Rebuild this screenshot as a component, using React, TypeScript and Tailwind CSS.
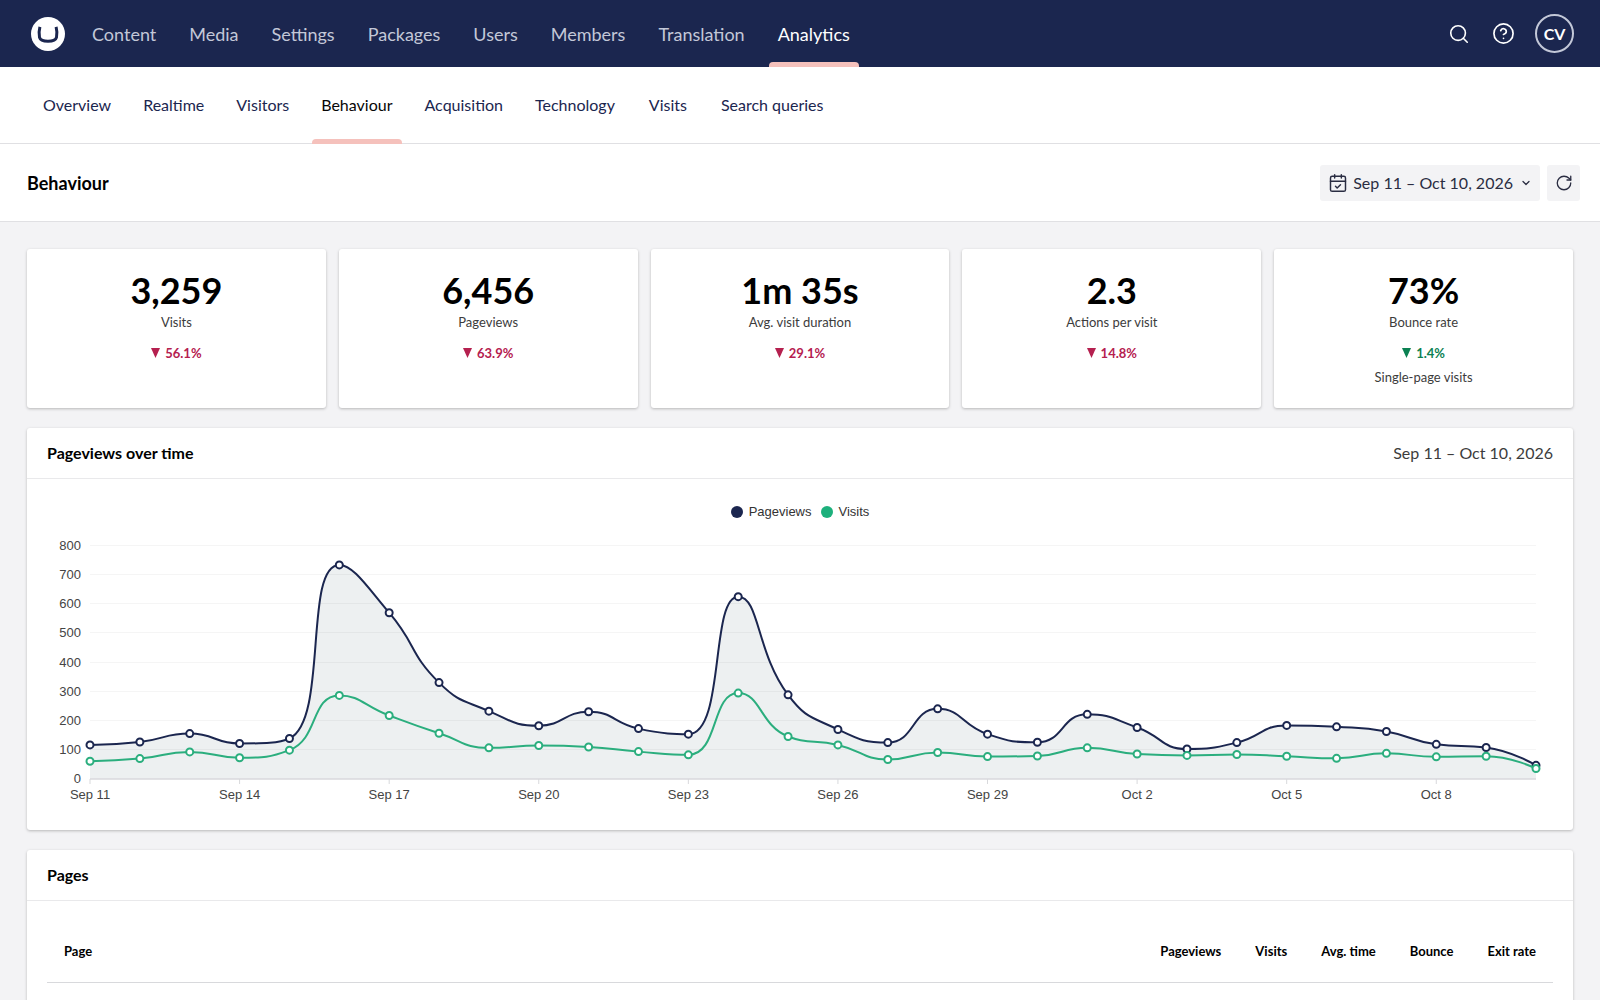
import { useLayoutEffect, useRef, useState } from 'react';
import { CalendarCheck, ChevronDown, CircleQuestionMark, RotateCw, Search } from 'lucide-react';

const SECTIONS = ['Content', 'Media', 'Settings', 'Packages', 'Users', 'Members', 'Translation', 'Analytics'];

const TABS = ['Overview', 'Realtime', 'Visitors', 'Behaviour', 'Acquisition', 'Technology', 'Visits', 'Search queries'];

const METRICS = [
  { value: '3,259', label: 'Visits', change: '56.1%', good: false },
  { value: '6,456', label: 'Pageviews', change: '63.9%', good: false },
  { value: '1m 35s', label: 'Avg. visit duration', change: '29.1%', good: false },
  { value: '2.3', label: 'Actions per visit', change: '14.8%', good: false },
  { value: '73%', label: 'Bounce rate', change: '1.4%', good: true, note: 'Single-page visits' },
];

const COLUMNS = ['Pageviews', 'Visits', 'Avg. time', 'Bounce', 'Exit rate'];

const PERIOD = 'Sep 11 – Oct 10, 2026';

const PAGEVIEWS = [
  117, 127, 156, 122, 139, 735, 571, 331, 233, 183, 231, 173, 154, 626, 289, 170, 125, 241, 154, 126, 222, 177, 103,
  125, 184, 179, 163, 119, 108, 47,
];

const VISITS = [
  61, 70, 93, 73, 99, 287, 218, 157, 107, 115, 110, 94, 83, 295, 146, 117, 67, 91, 77, 79, 107, 86, 81, 84, 78, 71, 88,
  76, 78, 36,
];

const DAY_LABELS = ['Sep 11', 'Sep 14', 'Sep 17', 'Sep 20', 'Sep 23', 'Sep 26', 'Sep 29', 'Oct 2', 'Oct 5', 'Oct 8'];

type Point = { x: number; y: number };

const clamp = (v: number, a: number, b: number) => Math.max(Math.min(v, Math.max(a, b)), Math.min(a, b));

// Smooth line through all points. Control points never go past a neighbouring
// point, so the curve does not overshoot at peaks.
function smoothPath(points: Point[], smooth = 0.5) {
  let d = `M${points[0].x},${points[0].y}`;
  let cp0 = points[0];

  for (let i = 1; i < points.length; i++) {
    const p = points[i];
    const prev = points[i - 1];
    const next = points[i + 1];
    let cp1 = p;
    let nextCp0 = p;

    if (next) {
      const lenPrev = Math.hypot(p.x - prev.x, p.y - prev.y);
      const lenNext = Math.hypot(next.x - p.x, next.y - p.y);
      const ratio = lenNext / (lenNext + lenPrev);

      const nx = clamp(p.x + (next.x - prev.x) * smooth * ratio, p.x, next.x);
      const ny = clamp(p.y + (next.y - prev.y) * smooth * ratio, p.y, next.y);
      cp1 = {
        x: clamp(p.x - ((nx - p.x) * lenPrev) / lenNext, prev.x, p.x),
        y: clamp(p.y - ((ny - p.y) * lenPrev) / lenNext, prev.y, p.y),
      };
      nextCp0 = {
        x: p.x + ((p.x - cp1.x) * lenNext) / lenPrev,
        y: p.y + ((p.y - cp1.y) * lenNext) / lenPrev,
      };
    }

    d += `C${cp0.x},${cp0.y} ${cp1.x},${cp1.y} ${p.x},${p.y}`;
    cp0 = nextCp0;
  }
  return d;
}

function Chart() {
  const ref = useRef<HTMLDivElement>(null);
  const [width, setWidth] = useState(1506);

  useLayoutEffect(() => {
    const el = ref.current;
    if (!el) return;
    const update = () => setWidth(el.clientWidth);
    update();
    const observer = new ResizeObserver(update);
    observer.observe(el);
    return () => observer.disconnect();
  }, []);

  const left = 43;
  const right = width - 17;
  const top = 19;
  const bottom = 252;
  const toX = (i: number) => left + ((right - left) * i) / (PAGEVIEWS.length - 1);
  const toY = (v: number) => bottom - ((bottom - top) * v) / 800;

  const series = [
    { name: 'Pageviews', color: '#1b264f', points: PAGEVIEWS.map((v, i) => ({ x: toX(i), y: toY(v) })) },
    { name: 'Visits', color: '#2bae7e', points: VISITS.map((v, i) => ({ x: toX(i), y: toY(v) })) },
  ];

  return (
    <div ref={ref} className="font-['Liberation_Sans',sans-serif] text-[13px] leading-4 text-[#333]">
      <ul className="flex justify-center gap-[9px] pt-[5px]">
        <li className="flex items-center gap-[6px]">
          <span className="size-3 rounded-full bg-[#1b264f]" />
          Pageviews
        </li>
        <li className="flex items-center gap-[6px]">
          <span className="size-3 rounded-full bg-[#1db07c]" />
          Visits
        </li>
      </ul>
      <svg className="mt-[7px] block h-[283px] w-full" role="img" aria-label="Pageviews and visits per day">
        {[0, 100, 200, 300, 400, 500, 600, 700, 800].map((v) => (
          <g key={v}>
            {v > 0 && (
              <line x1={left} x2={right} y1={Math.round(toY(v)) - 0.5} y2={Math.round(toY(v)) - 0.5} stroke="#f5f5f5" />
            )}
            <text x={left - 9} y={toY(v) + 4} textAnchor="end" fill="#444">
              {v}
            </text>
          </g>
        ))}

        <path
          d={`${smoothPath(series[0].points)}L${right},${bottom}L${left},${bottom}Z`}
          fill="#1b3a4f"
          fillOpacity="0.08"
        />

        <line x1={left} x2={right} y1={bottom} y2={bottom} stroke="#d8d9dc" strokeWidth="1.5" />
        {DAY_LABELS.map((label, i) => (
          <g key={label}>
            <line x1={toX(i * 3)} x2={toX(i * 3)} y1={bottom} y2={bottom + 5} stroke="#d8d9dc" />
            <text x={toX(i * 3)} y={bottom + 20} textAnchor="middle" fill="#444">
              {label}
            </text>
          </g>
        ))}

        {series.map((s) => (
          <g key={s.name} stroke={s.color} strokeWidth="2">
            <path d={smoothPath(s.points)} fill="none" strokeLinejoin="round" />
            {s.points.map((p) => (
              <circle key={p.x} cx={p.x} cy={p.y} r="3.5" fill="#fff" />
            ))}
          </g>
        ))}
      </svg>
    </div>
  );
}

function Metric({ value, label, change, good, note }: (typeof METRICS)[number]) {
  return (
    <div className="flex flex-col items-center rounded-[3px] bg-white px-5 py-[19px] text-[13px] leading-6 text-[#3c3c3c] shadow-[0_1px_3px_rgba(0,0,0,0.25)]">
      <div className="text-4xl leading-[44px] font-bold text-black">{value}</div>
      <div className="leading-[21px]">{label}</div>
      <div className={`mt-2 flex items-center gap-[5px] font-bold ${good ? 'text-[#0b8152]' : 'text-[#b5204f]'}`}>
        <svg className="h-[10px] w-[9px]" viewBox="0 0 9 10" fill="currentColor" aria-hidden="true">
          <path d="M0 0h9L4.5 10z" />
        </svg>
        {change}
      </div>
      {note && <div>{note}</div>}
    </div>
  );
}

export default function App() {
  return (
    <div className="h-screen overflow-hidden bg-[#f3f3f5] font-[Lato,sans-serif] text-[#1b264f]">
      <header className="flex h-[67px] items-center bg-[#1b264f] pr-[26px] pl-[31px]">
        <a href="#" aria-label="Home">
          <svg className="size-[34px]" viewBox="0 0 34 34">
            <circle cx="17" cy="17" r="17" fill="#fff" />
            <path
              d="M8.9 9.900C8 13.500 7.800 17.500 8.500 20.300c.8 3 3.100 3.900 8.500 3.900s7.700-.9 8.500-3.900c.7-2.800.5-6.800-.4-10.400"
              fill="none"
              stroke="#1b264f"
              strokeWidth="3"
            />
          </svg>
        </a>
        <nav className="ml-[18px] flex h-full gap-[15px]">
          {SECTIONS.map((name) => (
            <a
              key={name}
              href="#"
              className={`relative flex items-center px-[9px] text-lg ${name === 'Analytics' ? 'text-white' : 'text-[#c3c8d8]'}`}
            >
              {name}
              {name === 'Analytics' && <span className="absolute inset-x-0 bottom-0 h-[5px] rounded-t bg-[#f5c1bc]" />}
            </a>
          ))}
        </nav>
        <div className="ml-auto flex items-center text-white">
          <button aria-label="Search" className="mr-[22px]">
            <Search className="size-[22px]" strokeWidth={1.75} />
          </button>
          <button aria-label="Help" className="mr-5">
            <CircleQuestionMark className="size-[23px]" strokeWidth={1.75} />
          </button>
          <button className="flex size-[39px] items-center justify-center rounded-full border-2 border-[#c3c8d8] text-base font-bold">
            CV
          </button>
        </div>
      </header>

      <nav className="flex h-[77px] gap-[14px] border-b border-[#e0e0e3] bg-white pl-[34px]">
        {TABS.map((name) => (
          <a
            key={name}
            href="#"
            className={`relative flex min-w-[60px] items-center justify-center px-[9px] text-base ${name === 'Behaviour' ? 'text-[#060606]' : 'text-[#1b264f]'}`}
          >
            {name}
            {name === 'Behaviour' && <span className="absolute inset-x-0 -bottom-px h-[5px] rounded-t bg-[#f5c1bc]" />}
          </a>
        ))}
      </nav>

      <div className="flex h-[78px] items-center justify-between border-b border-[#e0e0e3] bg-white pr-5 pl-[27px]">
        <h1 className="text-lg font-bold text-black">Behaviour</h1>
        <div className="flex gap-[7px] text-[#2a2d42]">
          <button className="flex h-9 items-center rounded-[3px] bg-[#f3f3f5] px-2 text-base">
            <CalendarCheck className="mr-[5px] size-[20px]" strokeWidth={1.75} />
            {PERIOD}
            <ChevronDown className="ml-[7px] size-3" strokeWidth={2.5} />
          </button>
          <button aria-label="Refresh" className="flex h-9 w-[33px] items-center justify-center rounded-[3px] bg-[#f3f3f5]">
            <RotateCw className="size-[18px]" strokeWidth={1.75} />
          </button>
        </div>
      </div>

      <main className="flex flex-col gap-5 px-[27px] pt-[27px]">
        <div className="grid grid-cols-5 gap-[13px]">
          {METRICS.map((metric) => (
            <Metric key={metric.label} {...metric} />
          ))}
        </div>

        <section className="rounded-[3px] bg-white shadow-[0_1px_3px_rgba(0,0,0,0.25)]">
          <div className="flex h-[51px] items-center justify-between border-b border-[#e9e9eb] px-5 text-base">
            <h2 className="font-bold text-black">Pageviews over time</h2>
            <span className="text-[#3c3c3c]">{PERIOD}</span>
          </div>
          <div className="p-5">
            <Chart />
          </div>
        </section>

        <section className="rounded-[3px] bg-white shadow-[0_1px_3px_rgba(0,0,0,0.25)]">
          <div className="flex h-[51px] items-center border-b border-[#e9e9eb] px-5">
            <h2 className="text-base font-bold text-black">Pages</h2>
          </div>
          <div className="px-5 pt-5 pb-10">
            <table className="w-full text-[13px] text-black">
              <thead>
                <tr className="h-[61px] border-b border-[#d8d9dc]">
                  <th className="w-full px-[17px] text-left">Page</th>
                  {COLUMNS.map((name) => (
                    <th key={name} className="px-[17px] text-right whitespace-nowrap">
                      {name}
                    </th>
                  ))}
                </tr>
              </thead>
            </table>
          </div>
        </section>
      </main>
    </div>
  );
}
